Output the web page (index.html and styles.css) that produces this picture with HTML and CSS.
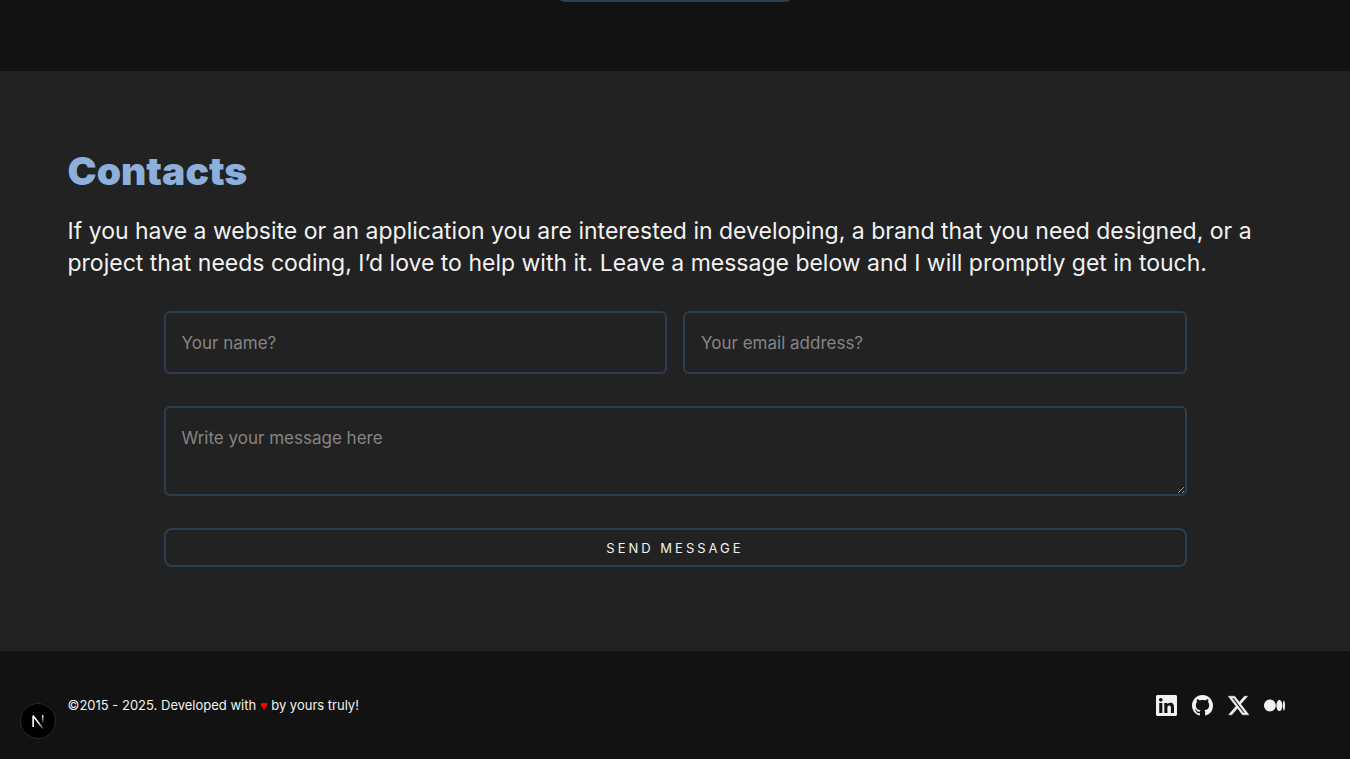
FILE: index.html
```html
<!DOCTYPE html>
<html lang="en">
<head>
<meta charset="utf-8">
<meta name="viewport" content="width=device-width, initial-scale=1">
<title>Contacts</title>
<link rel="stylesheet" href="styles.css">
</head>
<body>
<section class="previous">
  <div class="previous-action"></div>
</section>
<main class="contacts">
  <h2 class="title">Contacts</h2>
  <p class="intro">If you have a website or an application you are interested in developing, a brand that you need designed, or a project that needs coding, I’d love to help with it. Leave a message below and I will promptly get in touch.</p>
  <form class="form">
    <input class="field" type="text" name="name" aria-label="Your name" placeholder="Your name?">
    <input class="field" type="email" name="email" aria-label="Your email address" placeholder="Your email address?">
    <textarea class="field message" name="message" aria-label="Message" placeholder="Write your message here"></textarea>
    <button class="send" type="submit">Send message</button>
  </form>
</main>
<footer class="footer">
  <p class="copyright">©2015 - 2025. Developed with <span class="heart">♥</span> by yours truly!</p>
  <nav class="social" aria-label="Social links">
    <a href="#" aria-label="LinkedIn"><svg class="icon" viewBox="0 32 448 448"><path d="M416 32H31.9C14.3 32 0 46.5 0 64.3v383.4C0 465.5 14.3 480 31.9 480H416c17.6 0 32-14.5 32-32.3V64.3c0-17.8-14.4-32.3-32-32.3zM135.4 416H69V202.2h66.5V416zm-33.2-243c-21.3 0-38.5-17.3-38.5-38.5S80.9 96 102.2 96c21.2 0 38.5 17.3 38.5 38.5 0 21.3-17.2 38.5-38.5 38.5zm282.1 243h-66.4V312c0-24.8-.5-56.7-34.5-56.7-34.6 0-39.9 27-39.9 54.9V416h-66.4V202.2h63.7v29.2h.9c8.9-16.8 30.6-34.5 62.9-34.5 67.2 0 79.7 44.3 79.7 101.9V416z"/></svg></a>
    <a href="#" aria-label="GitHub"><svg class="icon" viewBox="0 0 16 16"><path d="M8 0C3.58 0 0 3.58 0 8c0 3.54 2.29 6.53 5.47 7.59.4.07.55-.17.55-.38 0-.19-.01-.82-.01-1.49-2.01.37-2.53-.49-2.69-.94-.09-.23-.48-.94-.82-1.13-.28-.15-.68-.52-.01-.53.63-.01 1.08.58 1.23.82.72 1.21 1.87.87 2.33.66.07-.52.28-.87.51-1.07-1.78-.2-3.64-.89-3.64-3.95 0-.87.31-1.59.82-2.15-.08-.2-.36-1.02.08-2.12 0 0 .67-.21 2.2.82.64-.18 1.32-.27 2-.27s1.36.09 2 .27c1.53-1.04 2.2-.82 2.2-.82.44 1.1.16 1.92.08 2.12.51.56.82 1.27.82 2.15 0 3.07-1.87 3.75-3.65 3.95.29.25.54.73.54 1.48 0 1.07-.01 1.93-.01 2.2 0 .21.15.46.55.38A8.01 8.01 0 0 0 16 8c0-4.42-3.58-8-8-8z"/></svg></a>
    <a href="#" aria-label="X"><svg class="icon" viewBox="1 1 22 22"><path stroke="currentColor" stroke-width="0.5" d="M18.244 2.25h3.308l-7.227 8.26 8.502 11.24H16.17l-5.214-6.817L4.99 21.75H1.68l7.73-8.835L1.254 2.25H8.08l4.713 6.231zm-1.161 17.52h1.833L7.084 4.126H5.117z"/></svg></a>
    <a href="#" aria-label="Medium"><svg class="icon" viewBox="0 -64 640 640"><path d="M180.5 74.262C80.813 74.262 0 155.633 0 256S80.819 437.738 180.5 437.738 361 356.373 361 256 280.191 74.262 180.5 74.262Zm288.25 10.646c-49.845 0-90.245 76.619-90.245 171.095s40.406 171.1 90.251 171.1 90.251-76.619 90.251-171.1C559 161.5 518.6 84.908 468.75 84.908Zm139.506 17.821c-17.526 0-31.735 68.628-31.735 153.274s14.2 153.274 31.735 153.274S640 340.631 640 256c0-84.649-14.215-153.271-31.744-153.271Z"/></svg></a>
  </nav>
</footer>
<button class="devtools" type="button" aria-label="Open developer tools">
  <svg class="devtools-logo" viewBox="0 0 40 40" fill="none" stroke-width="1.9">
    <defs>
      <linearGradient id="fade-diagonal" gradientUnits="userSpaceOnUse" x1="21" y1="21" x2="27" y2="29"><stop stop-color="#fff"/><stop offset="1" stop-color="#fff" stop-opacity="0.1"/></linearGradient>
      <linearGradient id="fade-stem" gradientUnits="userSpaceOnUse" x1="25" y1="13" x2="25" y2="23"><stop stop-color="#fff"/><stop offset="1" stop-color="#fff" stop-opacity="0"/></linearGradient>
    </defs>
    <path stroke="#fff" d="M14.3 27V14"/>
    <path stroke="url(#fade-diagonal)" d="M14 13.5L26 29"/>
    <path stroke="url(#fade-stem)" d="M25.5 13.2V23"/>
  </svg>
</button>
</body>
</html>
```
FILE: styles.css
```css
* {
  box-sizing: border-box;
}

body {
  margin: 0;
  background: #121212;
  color: #f2f2f2;
  font-family: Inter, "Liberation Sans", sans-serif;
  overflow: hidden;
}

.previous {
  display: flex;
  justify-content: center;
  padding-bottom: 69px;
}

.previous-action {
  width: 236px;
  height: 39px;
  margin-top: -37px;
  border: 2px solid #2e3e52;
  border-radius: 8px;
}

.contacts {
  padding: 72px 5% 84px;
  background: #222;
}

.title {
  margin: 0 0 16px;
  color: #8dafdc;
  font-size: 39px;
  font-weight: 900;
  line-height: 56px;
}

.intro {
  margin: 0 0 32px;
  font-size: 23px;
  line-height: 32px;
}

.form {
  display: grid;
  grid-template-columns: 1fr 1fr;
  gap: 32px 16px;
  max-width: 1023px;
  margin: 0 auto;
}

.field {
  width: 100%;
  min-width: 0;
  height: 63px;
  padding: 16px;
  background: transparent;
  border: 2px solid #2e3e52;
  border-radius: 6px;
  color: inherit;
  font-family: inherit;
  font-size: 17px;
  line-height: 28px;
}

.field::placeholder {
  color: #858585;
}

.message {
  display: block;
  grid-column: 1 / -1;
  height: 90px;
  resize: vertical;
}

.send {
  grid-column: 1 / -1;
  height: 39px;
  background: transparent;
  border: 2px solid #2e3e52;
  border-radius: 8px;
  color: inherit;
  font-family: inherit;
  font-size: 13px;
  letter-spacing: 3px;
  text-transform: uppercase;
}

.footer {
  display: flex;
  align-items: center;
  justify-content: space-between;
  padding: 42px 5%;
}

.copyright {
  margin: 0;
  font-size: 13px;
  line-height: 24px;
}

.heart {
  color: #f00;
  font-family: "Liberation Sans", sans-serif;
}

.social {
  display: flex;
  gap: 15px;
  margin-right: -2px;
}

.social a {
  display: flex;
  color: inherit;
}

.icon {
  width: 21px;
  height: 21px;
  fill: currentColor;
}

.devtools {
  position: fixed;
  left: 20px;
  bottom: 20px;
  width: 36px;
  height: 36px;
  padding: 0;
  background: #000;
  border: 1px solid #2b2b2b;
  border-radius: 50%;
}

.devtools-logo {
  display: block;
  width: 100%;
  height: 100%;
}
```
